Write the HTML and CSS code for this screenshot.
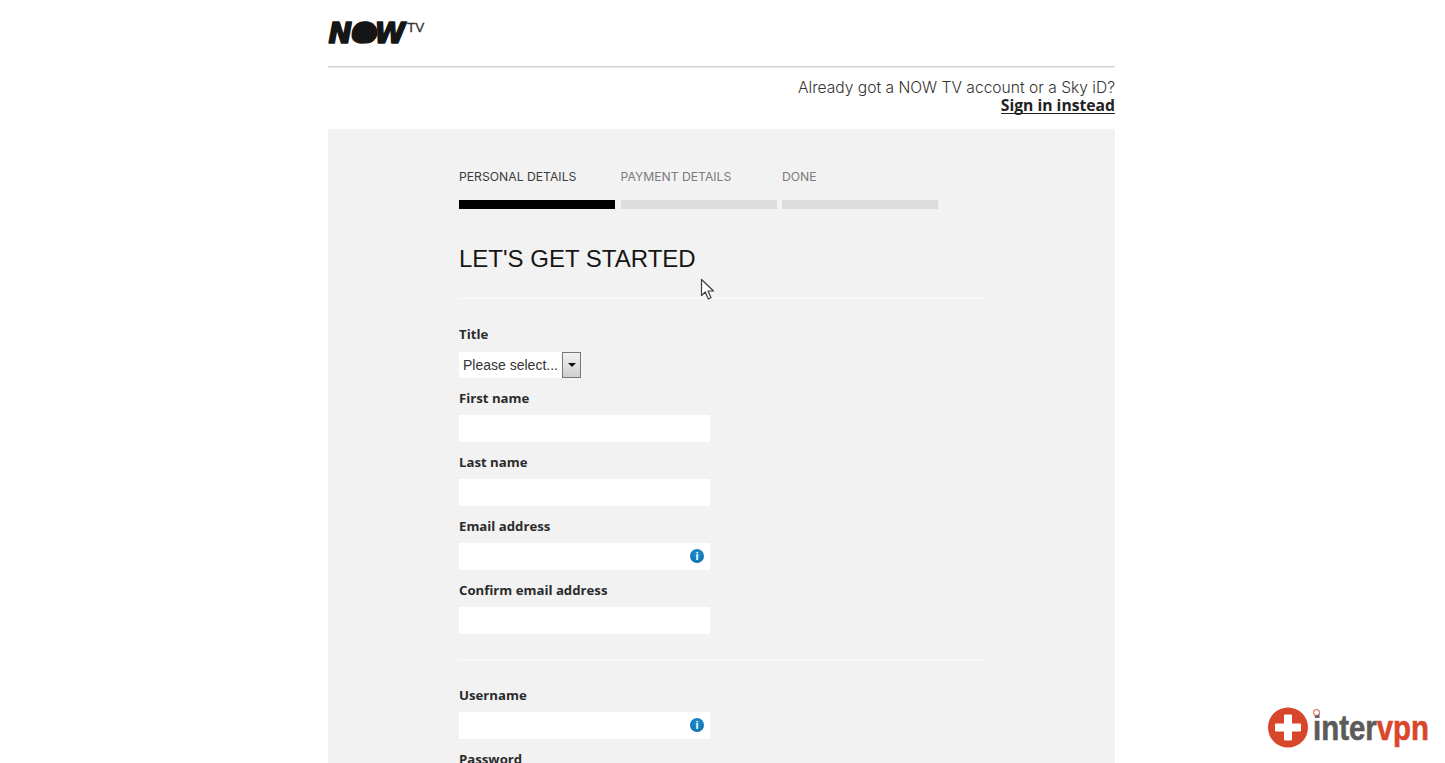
FILE: index.html
```html
<!DOCTYPE html>
<html lang="en">
<head>
<meta charset="utf-8">
<title>NOW TV - Let's get started</title>
<link rel="stylesheet" href="styles.css">
</head>
<body>
<div class="page">
  <header class="brand">
    <svg class="logo" width="100" height="32" viewBox="0 0 100 32" role="img" aria-label="NOW TV">
      <text class="logo-now" x="0.5" y="26">NOW</text>
      <circle class="logo-o" cx="38.5" cy="15.5" r="11"/>
      <text class="logo-tv" x="79" y="15">TV</text>
    </svg>
  </header>
  <div class="signin">
    <p class="signin-q">Already got a NOW TV account or a Sky iD?</p>
    <a class="signin-link" href="#">Sign in instead</a>
  </div>
  <main class="panel">
    <ol class="steps">
      <li class="step step-active"><span class="step-name">PERSONAL DETAILS</span><span class="step-bar"></span></li>
      <li class="step"><span class="step-name">PAYMENT DETAILS</span><span class="step-bar"></span></li>
      <li class="step"><span class="step-name">DONE</span><span class="step-bar"></span></li>
    </ol>
    <h1 class="heading">LET'S GET STARTED</h1>
    <form class="form">
      <div class="field field-select">
        <span class="label">Title</span>
        <div class="select">
          <span class="select-value">Please select...</span>
          <span class="select-btn"><span class="select-arrow"></span></span>
        </div>
      </div>
      <div class="field"><span class="label">First name</span><div class="input"></div></div>
      <div class="field"><span class="label">Last name</span><div class="input"></div></div>
      <div class="field"><span class="label">Email address</span><div class="input"><span class="info">i</span></div></div>
      <div class="field"><span class="label">Confirm email address</span><div class="input"></div></div>
      <div class="form-rule"></div>
      <div class="field"><span class="label">Username</span><div class="input"><span class="info">i</span></div></div>
      <div class="field"><span class="label">Password</span><div class="input"></div></div>
    </form>
  </main>
</div>
<svg class="cursor" width="16" height="24" viewBox="0 0 16 24" aria-hidden="true">
  <path d="M1.5 1.5 V17.5 L5.3 14 L8.3 21 L11 19.8 L8 13 L13.5 13 Z" fill="#fff" stroke="#3a3f45" stroke-width="1.2" stroke-linejoin="round"/>
</svg>
<div class="watermark">
  <svg class="wm-icon" width="42" height="42" viewBox="0 0 42 42" aria-hidden="true">
    <circle cx="21" cy="20.5" r="20" fill="#d8472b"/>
    <path d="M17.5 8 H24.5 V17 H33.5 V24 H24.5 V33 H17.5 V24 H8.5 V17 H17.5 Z" fill="#fff" stroke="#fff" stroke-width="1" stroke-linejoin="round"/>
  </svg>
  <span class="wm-text"><span class="wm-inter">inter</span><span class="wm-vpn">vpn</span></span>
  <span class="wm-dot"></span>
</div>
</body>
</html>
```
FILE: styles.css
```css
html, body {
  margin: 0;
  height: 763px;
  overflow: hidden;
  background: #fff;
}
body {
  font-family: "Open Sans", "Liberation Sans", sans-serif;
  color: #222;
}
.page {
  width: 787px;
  margin-left: 328px;
}
.brand {
  height: 67px;
  box-sizing: border-box;
  padding-top: 17px;
  border-bottom: 1px solid #d4d4d4;
  box-shadow: 0 1px 0 #ececec;
}
.logo {
  display: block;
}
.logo-now {
  font-family: "DejaVu Sans", sans-serif;
  font-weight: 700;
  font-style: italic;
  font-size: 28px;
  letter-spacing: -0.6px;
  fill: #161616;
  stroke: #161616;
  stroke-width: 1.6px;
  stroke-linejoin: round;
}
.logo-o {
  fill: #161616;
}
.logo-tv {
  font-family: "Liberation Sans", sans-serif;
  font-size: 13.5px;
  fill: #333;
  stroke: #333;
  stroke-width: 0.3px;
}
.signin {
  height: 62px;
  display: flex;
  flex-direction: column;
  align-items: flex-end;
  padding-top: 11px;
  box-sizing: border-box;
}
.signin-q {
  margin: 0;
  font-family: Inter, "Liberation Sans", sans-serif;
  font-weight: 300;
  font-size: 15.6px;
  line-height: 19px;
  color: #333;
}
.signin-link {
  font-family: "Open Sans", "Liberation Sans", sans-serif;
  font-size: 15.7px;
  font-weight: 700;
  line-height: 16px;
  color: #222;
  text-decoration: none;
  border-bottom: 1.5px solid #222;
}
.panel {
  background: #f2f2f2;
  height: 640px;
  padding: 40px 131px 0;
  box-sizing: border-box;
}
.steps {
  list-style: none;
  margin: 0;
  padding: 0;
  display: grid;
  grid-template-columns: 156px 156px 156px;
  column-gap: 5.5px;
}
.step {
  display: flex;
  flex-direction: column;
}
.step-name {
  font-family: Inter, "Liberation Sans", sans-serif;
  font-size: 12.2px;
  line-height: 16px;
  color: #7b7b7b;
  height: 31px;
}
.step-active .step-name {
  color: #3c3c3c;
}
.step-bar {
  height: 9px;
  background: #dcdcdc;
}
.step-active .step-bar {
  background: #000;
}
.heading {
  margin: 34px 0 0;
  width: 525px;
  height: 56px;
  box-sizing: border-box;
  font-family: "Liberation Sans", sans-serif;
  font-weight: 400;
  font-size: 24px;
  line-height: 32px;
  color: #161616;
  border-bottom: 1px solid #fafafa;
}
.form {
  padding-top: 25px;
}
.field {
  height: 64px;
}
.label {
  display: block;
  font-size: 13.2px;
  font-weight: 700;
  line-height: 20px;
  height: 27px;
  color: #2b2b2b;
}
.field-select .label {
  height: 28px;
}
.select {
  display: flex;
  width: 122px;
  height: 26px;
  background: #fff;
  align-items: center;
}
.select-value {
  flex: 1;
  padding-left: 4px;
  font-family: "Liberation Sans", sans-serif;
  font-size: 14px;
  color: #333;
  white-space: nowrap;
}
.select-btn {
  width: 17px;
  height: 24px;
  border: 1px solid #777;
  background: linear-gradient(#f2f2f2, #cfcfcf);
  display: flex;
  align-items: center;
  justify-content: center;
}
.select-arrow {
  width: 0;
  height: 0;
  border-left: 4px solid transparent;
  border-right: 4px solid transparent;
  border-top: 4px solid #111;
}
.input {
  width: 251px;
  height: 27px;
  background: #fff;
  display: flex;
  align-items: center;
  justify-content: flex-end;
  padding-right: 6px;
  box-sizing: border-box;
}
.info {
  width: 14px;
  height: 14px;
  margin-bottom: 2px;
  border-radius: 50%;
  background: radial-gradient(circle at 50% 35%, #1f8fd0, #0a6aa5);
  color: #fff;
  font-family: "Liberation Sans", sans-serif;
  font-size: 11px;
  font-weight: 700;
  line-height: 14px;
  text-align: center;
}
.form-rule {
  width: 525px;
  height: 1px;
  background: #fafafa;
  margin: 15px 0 25px;
}
.cursor {
  position: absolute;
  left: 700px;
  top: 278px;
}
.watermark {
  position: absolute;
  left: 1267px;
  top: 707px;
  width: 170px;
  height: 42px;
  display: flex;
  align-items: center;
}
.wm-icon {
  flex: none;
}
.wm-text {
  margin-left: 4px;
  font-family: "Liberation Sans", sans-serif;
  font-weight: 700;
  font-size: 35px;
  line-height: 42px;
  transform: scaleX(0.84);
  transform-origin: left center;
  white-space: nowrap;
  -webkit-text-stroke: 0.6px;
}
.wm-inter {
  color: #5b5b5b;
}
.wm-vpn {
  color: #d8472b;
}
.wm-dot {
  position: absolute;
  left: 46px;
  top: 2px;
  width: 5px;
  height: 5px;
  border: 1.5px solid #d8472b;
  border-radius: 50%;
  background: #fff;
}
```
